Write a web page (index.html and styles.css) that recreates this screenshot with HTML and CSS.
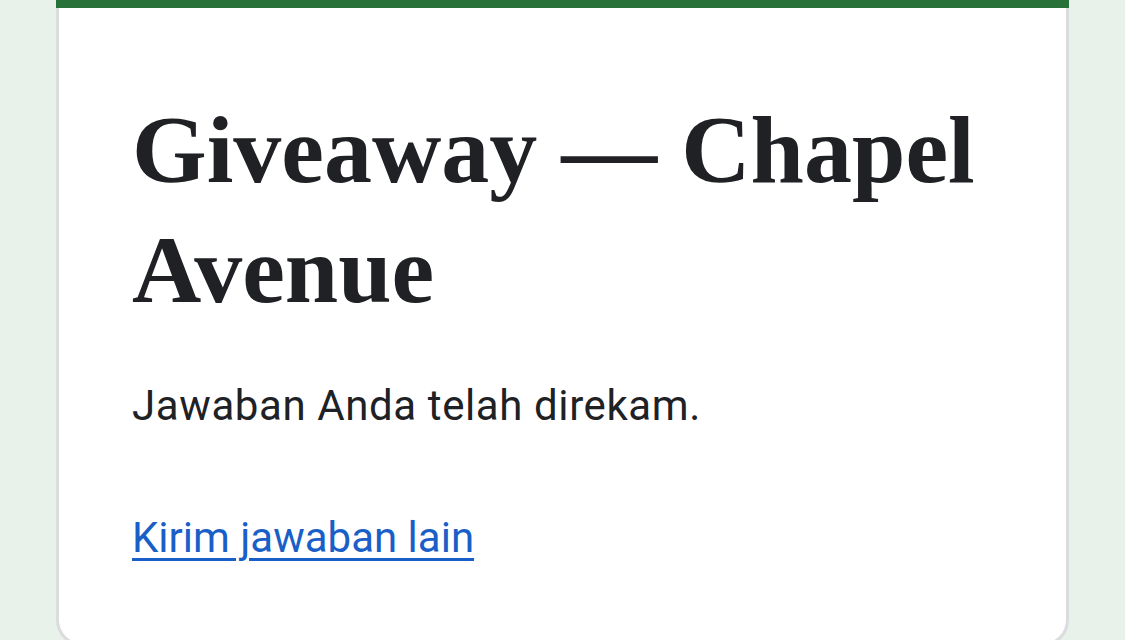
FILE: index.html
```html
<!DOCTYPE html>
<html lang="id">
<head>
<meta charset="utf-8">
<title>Giveaway — Chapel Avenue</title>
<link rel="stylesheet" href="styles.css">
</head>
<body>
<main class="page">
  <section class="card">
    <div class="card-bar"></div>
    <div class="card-body">
      <h1 class="title">Giveaway — Chapel Avenue</h1>
      <p class="message">Jawaban Anda telah direkam.</p>
      <p class="action"><a class="link" href="#">Kirim jawaban lain</a></p>
    </div>
  </section>
</main>
</body>
</html>
```
FILE: styles.css
```css
html, body {
  margin: 0;
  padding: 0;
  background: #e8f1ea;
  height: 100%;
  overflow: hidden;
}
.page {
  padding-left: 56px;
  width: 1013px;
}
.card {
  background: #ffffff;
  border: 3px solid #dadce0;
  border-top: none;
  border-radius: 0 0 26px 26px;
  height: 646px;
  box-sizing: border-box;
}
.card-bar {
  height: 8px;
  margin: 0 -3px;
  background: #287239;
}
.card-body {
  padding: 82px 60px 0 73px;
}
.title {
  margin: 0;
  font-family: "Liberation Serif", "Times New Roman", serif;
  font-weight: bold;
  font-size: 96px;
  line-height: 120px;
  color: #202124;
}
.message {
  margin: 46px 0 0;
  font-family: Roboto, "Noto Sans", sans-serif;
  font-size: 42px;
  line-height: 60px;
  letter-spacing: 0.6px;
  color: #202124;
}
.action {
  margin: 72px 0 0;
  font-family: Roboto, "Noto Sans", sans-serif;
  font-size: 42px;
  line-height: 60px;
}
.link {
  color: #1a5fc8;
  text-decoration: underline;
  text-underline-offset: 6px;
  text-decoration-thickness: 3px;
}
```
